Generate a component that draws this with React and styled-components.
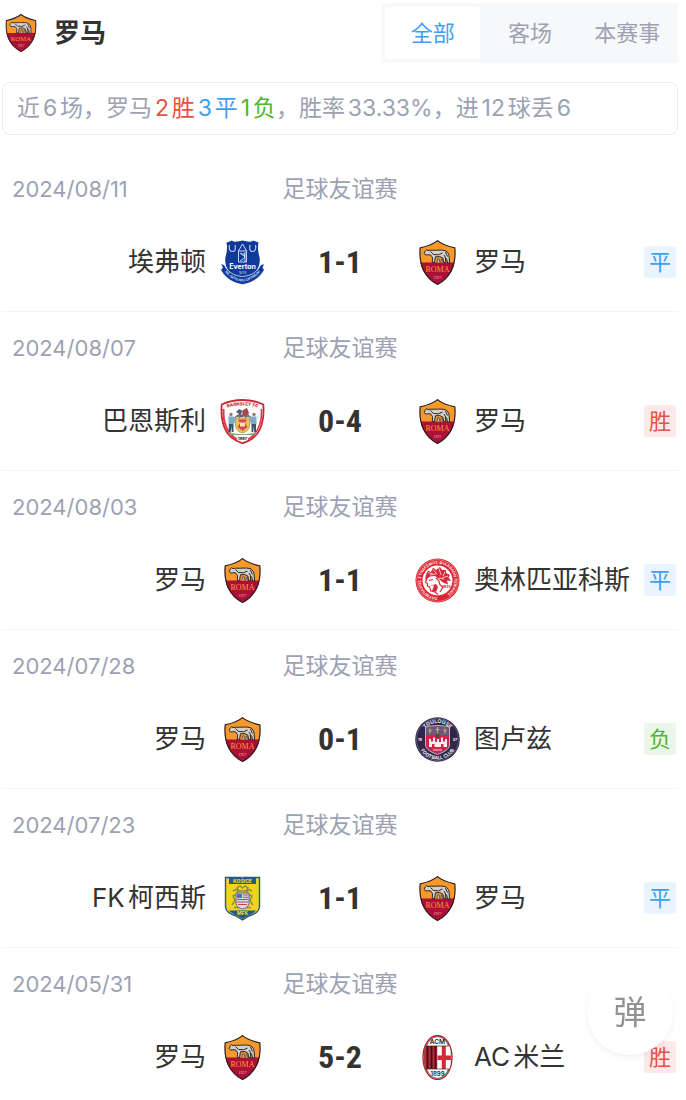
import { useState } from "react";
import styled, { createGlobalStyle } from "styled-components";

const GlobalStyle = createGlobalStyle`
  * {
    box-sizing: border-box;
  }
  body {
    margin: 0;
    background: #fff;
    color: #333;
    font-family: "Inter", "Noto Sans CJK SC", sans-serif;
    text-autospace: normal;
  }
  button {
    font-family: inherit;
    text-autospace: inherit;
  }
`;

const tabs = ["全部", "客场", "本赛事"];

const matches = [
  { date: "2024/08/11", league: "足球友谊赛", home: "埃弗顿", homeLogo: "everton", score: "1-1", away: "罗马", awayLogo: "roma", result: "平" },
  { date: "2024/08/07", league: "足球友谊赛", home: "巴恩斯利", homeLogo: "barnsley", score: "0-4", away: "罗马", awayLogo: "roma", result: "胜" },
  { date: "2024/08/03", league: "足球友谊赛", home: "罗马", homeLogo: "roma", score: "1-1", away: "奥林匹亚科斯", awayLogo: "olympiacos", result: "平" },
  { date: "2024/07/28", league: "足球友谊赛", home: "罗马", homeLogo: "roma", score: "0-1", away: "图卢兹", awayLogo: "toulouse", result: "负" },
  { date: "2024/07/23", league: "足球友谊赛", home: "FK柯西斯", homeLogo: "kosice", score: "1-1", away: "罗马", awayLogo: "roma", result: "平" },
  { date: "2024/05/31", league: "足球友谊赛", home: "罗马", homeLogo: "roma", score: "5-2", away: "AC米兰", awayLogo: "milan", result: "胜" },
];

const resultColors = {
  胜: { color: "#e8503f", background: "#fdeae8" },
  平: { color: "#409ff5", background: "#e9f4ff" },
  负: { color: "#4fb52f", background: "#eaf6e7" },
};

const Roma = () => (
  <>
    <path d="M22.5 .6C18 4.500 12 6.300 5.200 7.800C4.600 14 4.700 19 5.600 23H39.400C40.300 19 40.400 14 39.800 7.800C33 6.300 27 4.500 22.500 .6Z" fill="#f7982a" />
    <path d="M5.500 22.500C7 32.500 14 40 22.500 44.500C31 40 38 32.500 39.500 22.500Z" fill="#ad0f35" />
    <path d="M22.500 .6C18 4.500 12 6.300 5.200 7.800C3.500 25 10 38 22.500 44.500C35 38 41.500 25 39.800 7.800C33 6.300 27 4.500 22.500 .6Z" fill="none" stroke="#2b2022" strokeWidth="1.200" />
    <path d="M9.300 13.500L10.200 11.200L11.500 9.600L13 10.600L15.500 10.200C20 10.600 26 9.400 30 10.600C33 11.600 34.300 14.500 34.200 18L34.700 23H32.500L31.800 19.500L30.300 17.500L30.800 22.500H28.800L27.800 18L24.500 16.500L20.500 16.800L19.500 22.500H17.300L17.500 17.500L15.500 14.800L12.500 14.800L10.500 15Z" fill="#d3d0c9" stroke="#2a2526" strokeWidth="1" />
    <path d="M15.500 11.500L18.500 14.500L23.500 14.800L27.500 13M30.500 12L32.500 16.500M29 15L30.500 17.500" stroke="#2a2526" strokeWidth="1" fill="none" />
    <path d="M22 22.500L22.500 19L24 18.500L24.800 22.500M25.800 22.500L26 19.500L27 19L27.800 22.500" fill="#c0bbb2" stroke="#2a2526" strokeWidth=".6" />
    <text x="22.500" y="31.500" textAnchor="middle" fontFamily="Liberation Serif, serif" fontSize="8" fill="#ff9a35">ROMA</text>
    <text x="22.500" y="38.500" textAnchor="middle" fontFamily="Liberation Serif, serif" fontSize="4" fill="#f0b8b8">1927</text>
  </>
);

const Everton = () => (
  <>
    <path d="M6.500 2.500C8 2.200 10 1.500 11.500 .5C15 2.500 18 1.500 22.500 .5C27 1.500 30 2.500 33.500 .5C35 1.500 37 2.200 38.500 2.500C37.500 8 38 12 39.500 17C41 25 37 35 22.500 42C8 35 4 25 5.500 17C7 12 7.500 8 6.500 2.500Z" fill="#103a99" />
    <path d="M.5 23.500L4.500 25C7.500 32 14 36 22.500 36.500C31 36 37.500 32 40.500 25L44.500 23.500L43 27.500L44.300 30C39 39 31 43.500 22.500 44.500C14 43.500 6 39 .7 30L2.500 27.500Z" fill="#103a99" stroke="#fff" strokeWidth=".7" />
    <path d="M9.500 5C8.500 9.500 10.300 11.500 12.500 11.500S16 9.500 15 5M30 5C29 9.500 30.500 11.500 32.500 11.500S36.500 9.500 35.500 5" fill="none" stroke="#b9c8f2" strokeWidth="1.200" />
    <path d="M22.500 4L18.500 11V22H26.500V11ZM18.500 11H26.500M21 14H24.500V18L20 21M25 12V22M20 13L24 16" fill="none" stroke="#dfe9ff" strokeWidth=".9" />
    <text x="22.500" y="29" textAnchor="middle" fontFamily="Inter, sans-serif" fontWeight="700" fontSize="7" fill="#fff">Everton</text>
    <text x="22.500" y="33.500" textAnchor="middle" fontFamily="Inter, sans-serif" fontSize="3.500" fill="#c8d5fa">1878</text>
    <path id="evertonMotto" d="M3 29.500C9 37.500 15 41 22.500 41.500C30 41 36 37.500 42 29.500" fill="none" />
    <text fontFamily="Inter, sans-serif" fontSize="3.400" fontWeight="600" fill="#dfe9ff">
      <textPath href="#evertonMotto" startOffset="50%" textAnchor="middle">NIL SATIS NISI OPTIMUM</textPath>
    </text>
  </>
);

const Barnsley = () => (
  <>
    <path d="M1.700 5.500C8 2.500 15 1 22.500 1S37 2.500 43.300 5.500C44 14 43.500 22 40 30C37 37 31 41.500 22.500 44.300C14 41.500 8 37 5 30C1.500 22 1 14 1.700 5.500Z" fill="#fbfafa" stroke="#c92735" strokeWidth="1.800" />
    <path d="M3.500 10C3 22 6 34 17 40.500" fill="none" stroke="#d8404b" strokeWidth="2" />
    <path d="M41.500 10C42 22 39 34 28 40.500" fill="none" stroke="#d8404b" strokeWidth="1.600" />
    <path id="barnsleyName" d="M6 9C15 5.500 30 5.500 39 9" fill="none" />
    <text fontFamily="Inter, sans-serif" fontSize="4.400" fontWeight="800" fill="#cb2735">
      <textPath href="#barnsleyName" startOffset="50%" textAnchor="middle">BARNSLEY FC</textPath>
    </text>
    <path d="M16 13L19 10L23 12L21 15L24 18L18 18L19 15Z" fill="#5b5f7c" />
    <path d="M23 11L27 9L29 14L26 18L22 17Z" fill="#a8454f" />
    <path d="M14.500 19L18 16L20 19M25 19L28 16L31 19" fill="none" stroke="#6f7793" strokeWidth="1.500" />
    <path d="M15.500 19H29.500V27C29 31 26 33 22.500 34C19 33 16 31 15.500 27Z" fill="#e9c652" stroke="#a07a40" strokeWidth=".6" />
    <path d="M18 20.500H27L25 24L27.500 28L22.500 32L17.500 28L20 24Z" fill="#d5494a" />
    <path d="M20 23.500H25V27.500H20Z" fill="#f3e4b5" />
    <circle cx="11" cy="15.500" r="1.700" fill="#9c7a63" />
    <circle cx="34" cy="15.500" r="1.700" fill="#9c7a63" />
    <path d="M8.500 17.500H13.500L15.500 21L14 25H8.500ZM31.500 17.500H36.500V25H31L29.500 21Z" fill="#7fa9c8" />
    <path d="M8.800 25H13.500V33H11.700V27L10.700 33H8.800ZM31.500 25H36V33H34.300L33.300 27V33H31.500Z" fill="#3c516e" />
    <path d="M8.500 33C16 36 29 36 36.500 33L35 36H10Z" fill="#72ab68" />
    <text x="22.500" y="40.800" textAnchor="middle" fontFamily="Inter, sans-serif" fontWeight="800" fontSize="3.800" fill="#222">1887</text>
  </>
);

const Olympiacos = () => (
  <>
    <circle cx="22.500" cy="22.500" r="22" fill="#dc2332" />
    <circle cx="22.500" cy="22.500" r="20.800" fill="none" stroke="#f7b7bc" strokeWidth=".5" />
    <circle cx="22.500" cy="22.500" r="15" fill="#fff" />
    <path id="olympiacosRing" d="M22.500 39.200A16.700 16.700 0 1 1 22.600 39.200" fill="none" />
    <text fontFamily="Inter, sans-serif" fontSize="3.800" fontWeight="700" fill="#ffe6e7">
      <textPath href="#olympiacosRing">ΟΛΥΜΠΙΑΚΟΣ ΣΥΝΔΕΣΜΟΣ ΦΙΛΑΘΛΩΝ ΠΕΙΡΑΙΩΣ</textPath>
    </text>
    <path d="M10.500 18L13 12.500L16 14L18 9.500L21 12L25 9L27 12L31 12L31 15L35 17L33.500 19.500L36 23L32 22.500L33 26.500L28 24.500L24 21L20 18L15 18.500L10.500 22Z" fill="#d92938" />
    <path d="M13 14.500L18 16M18 11.500L22 16M24 10.500L26 17M30 13.500L28 18M33 18L27 20M15 17L21 16M24 20L29 21" stroke="#fff" strokeWidth=".7" />
    <path d="M12 20L10.500 24.500L12.500 25.500L12.300 28L14.500 29L16 33L20 34L23 36.500M21 20L24 23L25 27L28 29L25 34M14 22.500L18 21.500" fill="none" stroke="#d92938" strokeWidth="1.200" />
    <path d="M14.500 28L19 27.500L17 33L21 34L23 29L21 26Z" fill="#d92938" />
    <text x="31.500" y="30" textAnchor="middle" fontFamily="Inter, sans-serif" fontSize="3.600" fontWeight="700" fill="#dc2332">1925</text>
  </>
);

const Toulouse = () => (
  <>
    <circle cx="22.500" cy="22.500" r="22.300" fill="#30264a" />
    <circle cx="22.500" cy="22.500" r="21" fill="none" stroke="#8b829b" strokeWidth=".5" />
    <path id="toulouseTop" d="M6 22.500A16.500 16.500 0 0 1 39 22.500" fill="none" />
    <path id="toulouseBottom" d="M2.600 22.500A19.900 19.900 0 0 0 42.400 22.500" fill="none" />
    <text fontFamily="Inter, sans-serif" fontSize="5.200" fontWeight="700" fill="#eeeaf2">
      <textPath href="#toulouseTop" startOffset="50%" textAnchor="middle">TOULOUSE</textPath>
    </text>
    <text fontFamily="Inter, sans-serif" fontSize="4.800" fontWeight="700" fill="#eeeaf2">
      <textPath href="#toulouseBottom" startOffset="50%" textAnchor="middle">FOOTBALL CLUB</textPath>
    </text>
    <text x="5" y="24" textAnchor="middle" fontFamily="Inter, sans-serif" fontSize="3.800" fontWeight="600" fill="#fff">19</text>
    <text x="40" y="24" textAnchor="middle" fontFamily="Inter, sans-serif" fontSize="3.800" fontWeight="600" fill="#fff">37</text>
    <path d="M10.500 10C18 8 27 8 34.500 10V28C34 33 28 35.500 22.500 37.500C17 35.500 11 33 10.500 28Z" fill="#6c587c" stroke="#d6cfdb" strokeWidth=".8" />
    <path d="M15 11.500V16.500M13.500 13.500H16.500M22.500 10V16M20.500 12.500H24.500M30 11.500V16.500M28.500 13.500H31.500" stroke="#c8a77c" strokeWidth="1.200" />
    <path d="M11 18H34V28C33 32 28 34.500 22.500 36.500C17 34.500 12 32 11 28Z" fill="#d3224a" />
    <path d="M14 30V22H16V24.500H18V20.500H20V25H22V22H24V25H26V20.500H28V24.500H30V22H32V30H28.500V27H26V30H19.500V27H17V30Z" fill="#f6eef0" />
    <circle cx="22.500" cy="19" r="2" fill="#5e4130" />
    <path d="M18 33H27" stroke="#f5cbd5" strokeWidth="1" />
  </>
);

const Kosice = () => (
  <>
    <path d="M5.500 1.500H39.500V31C39 36 34 38.500 29 40L22.500 44L16 40C11 38.500 6 36 5.500 31Z" fill="#f1d51c" stroke="#255a82" strokeWidth="1.400" />
    <path d="M9 2H36V8H9Z" fill="#1f5b8c" />
    <path d="M9 34.500H36C34 37 31 38.500 28 39.500L22.500 43L17 39.500C14 38.500 11 37 9 34.500Z" fill="#1f5b8c" />
    <text x="22.500" y="6.800" textAnchor="middle" fontFamily="Inter, sans-serif" fontSize="5" fontWeight="800" fill="#f1d51c">KOŠICE</text>
    <text x="22.500" y="39" textAnchor="middle" fontFamily="Inter, sans-serif" fontSize="4.800" fontWeight="800" fill="#f1d51c">MFK</text>
    <path d="M17 12L20 10L22.500 12L25 10L28 12L26 15H19ZM13 15L17 13L18 18L13 20L15 25L12 29M32 15L28 13L27 18L32 20L30 25L33 29M14 31.500H31" fill="none" stroke="#8d8c49" strokeWidth="1.500" />
    <path d="M16 17H29V28C28 31 25 32.500 22.500 33C20 32.500 17 31 16 28Z" fill="#dcdce4" stroke="#58698a" strokeWidth="1" />
    <path d="M17 18H22V22H17Z" fill="#4a74a8" />
    <path d="M17 23.500H28M17 26H28M18 28.500H27M23 19H28M23 21.300H28" stroke="#c84159" strokeWidth="1" />
  </>
);

const Milan = () => (
  <>
    <ellipse cx="22.500" cy="22.500" rx="14.500" ry="22" fill="#fff" stroke="#b51d2b" strokeWidth="1.300" />
    <ellipse cx="22.500" cy="22.500" rx="13.300" ry="20.800" fill="none" stroke="#222" strokeWidth=".7" />
    <path d="M10.500 11H22.500V34H10.500C8.500 26 8.500 19 10.500 11Z" fill="#c62233" />
    <path d="M12.500 11V34M16.500 11V34M20.500 11V34" stroke="#271b20" strokeWidth="1.800" />
    <path d="M22.500 11H34.500C36.500 19 36.500 26 34.500 34H22.500Z" fill="#fff" />
    <path d="M26.800 11H30.800V20.500H35.900V25H30.800V34H26.800V25H22.500V20.500H26.800Z" fill="#d22838" />
    <path d="M10.500 11H34.500M10.500 34H34.500" stroke="#312528" strokeWidth=".7" />
    <text x="22.500" y="9" textAnchor="middle" fontFamily="Inter, sans-serif" fontSize="6.500" fontWeight="600" fill="#222">ACM</text>
    <text x="22.500" y="40.500" textAnchor="middle" fontFamily="Inter, sans-serif" fontSize="6" fontWeight="600" fill="#222">1899</text>
  </>
);

const logos = {
  roma: Roma,
  everton: Everton,
  barnsley: Barnsley,
  olympiacos: Olympiacos,
  toulouse: Toulouse,
  kosice: Kosice,
  milan: Milan,
};

const TeamLogo = ({ name, size = 45 }) => {
  const Logo = logos[name];
  return (
    <LogoSvg viewBox="0 0 45 45" $size={size} aria-hidden="true">
      <Logo />
    </LogoSvg>
  );
};

const MatchRow = ({ match }) => (
  <Match>
    <Columns>
      <DateText dateTime={match.date.replaceAll("/", "-")}>{match.date}</DateText>
      <League>{match.league}</League>
    </Columns>
    <Teams>
      <Home>
        <TeamName>{match.home}</TeamName>
        <TeamLogo name={match.homeLogo} />
      </Home>
      <Score>{match.score}</Score>
      <Away>
        <TeamLogo name={match.awayLogo} />
        <TeamName>{match.away}</TeamName>
        <Result $result={match.result}>{match.result}</Result>
      </Away>
    </Teams>
  </Match>
);

export default function App() {
  const [active, setActive] = useState("全部");

  return (
    <Page>
      <GlobalStyle />
      <Header>
        <TeamLogo name="roma" size={38} />
        <Title>罗马</Title>
        <Tabs>
          {tabs.map((tab) => (
            <Tab
              key={tab}
              type="button"
              aria-pressed={tab === active}
              $active={tab === active}
              onClick={() => setActive(tab)}
            >
              {tab}
            </Tab>
          ))}
        </Tabs>
      </Header>

      <Summary>
        近6场，罗马<Count $result="胜">2胜</Count>
        <Count $result="平">3平</Count>
        <Count $result="负">1负</Count>，胜率33.33%，进12球丢6
      </Summary>

      <MatchList>
        {matches.map((match) => (
          <MatchRow key={match.date} match={match} />
        ))}
      </MatchList>

      <FloatButton type="button">弹</FloatButton>
    </Page>
  );
}

const Page = styled.main`
  padding: 3px 8px 0 2px;
`;
const Header = styled.header`
  display: flex;
  align-items: center;
  height: 60px;
`;
const LogoSvg = styled.svg`
  flex: none;
  width: ${({ $size }) => $size}px;
  height: ${({ $size }) => $size}px;
`;
const Title = styled.h1`
  margin: 0 0 0 14px;
  font-size: 26px;
  font-weight: 700;
  line-height: 38px;
`;
const Tabs = styled.div`
  display: grid;
  grid-template-columns: repeat(3, 1fr);
  gap: 2px;
  width: 296px;
  height: 60px;
  margin-left: auto;
  padding: 4px 3px;
  background: #f7f8fa;
`;
const Tab = styled.button`
  padding: 0;
  border: none;
  border-radius: 3px;
  background: ${({ $active }) => ($active ? "#fff" : "transparent")};
  color: ${({ $active }) => ($active ? "#409ff5" : "#9ca2b2")};
  font-size: 22px;
  line-height: 32px;
  cursor: pointer;
`;
const Summary = styled.p`
  margin: 19px 0 0;
  padding: 10px 14px;
  border: 1px solid #ebecef;
  border-radius: 8px;
  color: #9ca2b2;
  font-size: 23px;
  line-height: 31px;
  white-space: nowrap;
`;
const Count = styled.span`
  color: ${({ $result }) => resultColors[$result].color};
`;
const MatchList = styled.ul`
  margin: 18px 0 0;
  padding: 0;
  list-style: none;
`;
const Match = styled.li`
  padding: 20px 0 25px;
  border-bottom: 1px solid #f3f4f5;
  &:last-child {
    padding-bottom: 0;
    border-bottom: none;
  }
`;
const Columns = styled.div`
  display: grid;
  grid-template-columns: 1fr 150px 1fr;
  align-items: center;
`;
const Teams = styled(Columns)`
  height: 48px;
  margin-top: 33px;
`;
const DateText = styled.time`
  padding-left: 10px;
  color: #9ca2b2;
  font-size: 22px;
  line-height: 32px;
`;
const League = styled.span`
  color: #9ca2b2;
  font-size: 23px;
  line-height: 32px;
  text-align: center;
  white-space: nowrap;
`;
const Home = styled.div`
  display: flex;
  align-items: center;
  justify-content: flex-end;
  gap: 14px;
`;
const Away = styled.div`
  display: flex;
  align-items: center;
  gap: 14px;
`;
const TeamName = styled.span`
  font-size: 26px;
  line-height: 38px;
  white-space: nowrap;
`;
const Score = styled.strong`
  font-family: "Roboto Condensed", "Roboto", sans-serif;
  font-size: 32px;
  font-weight: 700;
  line-height: 48px;
  text-align: center;
`;
const Result = styled.span`
  flex: none;
  width: 32px;
  height: 32px;
  margin: 0 2px 0 auto;
  border-radius: 3px;
  background: ${({ $result }) => resultColors[$result].background};
  color: ${({ $result }) => resultColors[$result].color};
  font-size: 22px;
  line-height: 32px;
  text-align: center;
`;
const FloatButton = styled.button`
  position: fixed;
  right: 13px;
  bottom: 45px;
  width: 86px;
  height: 86px;
  padding: 0;
  border: none;
  border-radius: 50%;
  background: #fff;
  box-shadow: 0 3px 6px rgba(0, 0, 0, 0.06);
  color: #929292;
  font-size: 33px;
  line-height: 48px;
  cursor: pointer;
`;
